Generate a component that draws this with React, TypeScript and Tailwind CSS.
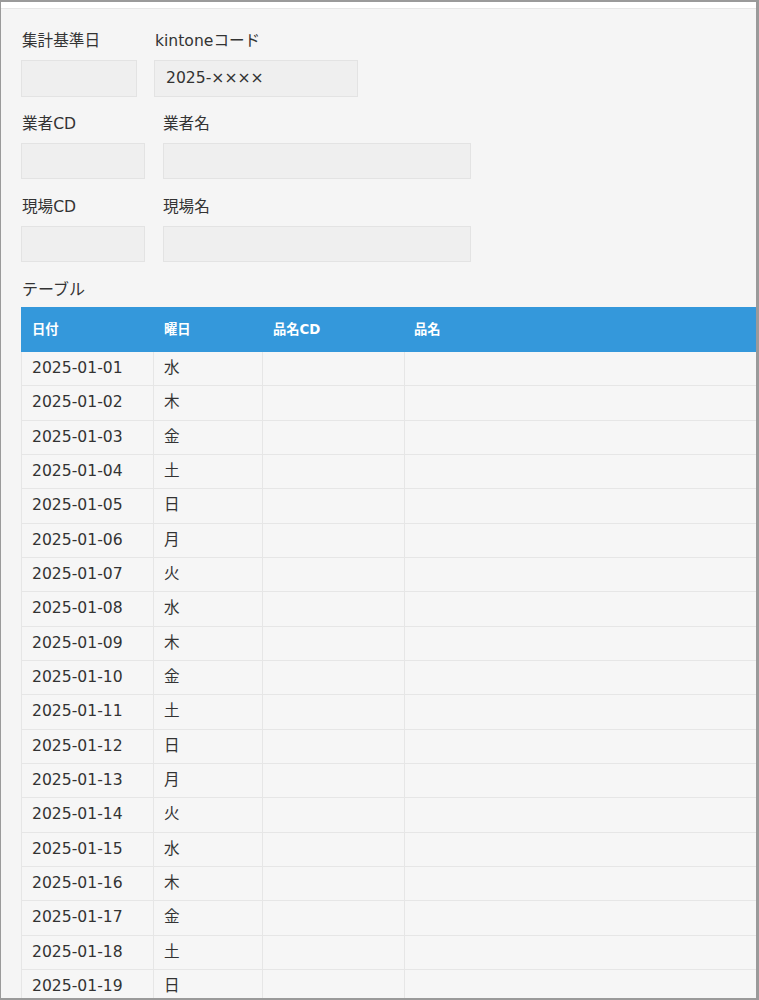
const weekdays = ['水', '木', '金', '土', '日', '月', '火']

const rows = Array.from({ length: 19 }, (_, i) => ({
  date: `2025-01-${String(i + 1).padStart(2, '0')}`,
  day: weekdays[i % 7],
}))

function Field({ label, width, height, value, indent = true }: { label: string; width: string; height: string; value?: string; indent?: boolean }) {
  return (
    <div className="flex flex-col">
      <div className={`h-[23px] text-[15.6px] leading-[23px] text-[#333] ${indent ? 'pl-[1px]' : ''}`}>{label}</div>
      <div className={`mt-[7px] flex items-center border border-[#e3e3e3] bg-[#efefef] px-[11px] text-[15.6px] text-[#333] ${width} ${height}`}>
        {value}
      </div>
    </div>
  )
}

export default function App() {
  return (
    <div
      className="h-[1000px] w-[759px] overflow-hidden border-t-2 border-r-[3px] border-b-2 border-l border-[#9a9a9a] bg-white"
      style={{ fontFamily: '"DejaVu Sans", "Noto Sans CJK JP", sans-serif' }}
    >
      {/* top strip */}
      <div className="h-[7px] border-b border-[#e6e6e6] bg-white" />

      <div className="h-full bg-[#f5f5f5] pt-[21px] pl-[20px]">
        {/* Fields */}
        <div className="flex gap-[17px]">
          <Field label="集計基準日" width="w-[116px]" height="h-[37px]" />
          <Field label="kintoneコード" width="w-[204px]" height="h-[37px]" value="2025-××××" />
        </div>
        <div className="mt-[16px] flex gap-[18px]">
          <Field label="業者CD" width="w-[124px]" height="h-[36px]" />
          <Field label="業者名" width="w-[308px]" height="h-[36px]" indent={false} />
        </div>
        <div className="mt-[17px] flex gap-[18px]">
          <Field label="現場CD" width="w-[124px]" height="h-[36px]" />
          <Field label="現場名" width="w-[308px]" height="h-[36px]" indent={false} />
        </div>

        <div className="mt-[15px] pl-[1px] text-[16px] leading-[26px] text-[#333]">テーブル</div>

        {/* Table */}
        <div className="mt-[4px] w-[740px]">
          <div className="flex h-[45px] items-center bg-[#3498db] text-[13.3px] font-bold text-white">
            <div className="w-[132px] pl-[11px]">日付</div>
            <div className="w-[109px] pl-[11px]">曜日</div>
            <div className="w-[142px] pl-[11px]">品名CD</div>
            <div className="flex-1 pl-[10px]">品名</div>
          </div>
          {rows.map((r) => (
            <div key={r.date} className="flex h-[34.33px] border-b border-[#e6e6e6] bg-[#f6f6f6] text-[15.6px] text-[#333]">
              <div className="flex w-[132px] items-center border-l border-[#e6e6e6] pl-[10px]">{r.date}</div>
              <div className="flex w-[109px] items-center border-l border-[#e6e6e6] pl-[10px]">{r.day}</div>
              <div className="w-[142px] border-l border-[#e6e6e6]" />
              <div className="flex-1 border-l border-[#e6e6e6]" />
            </div>
          ))}
        </div>
      </div>
    </div>
  )
}
